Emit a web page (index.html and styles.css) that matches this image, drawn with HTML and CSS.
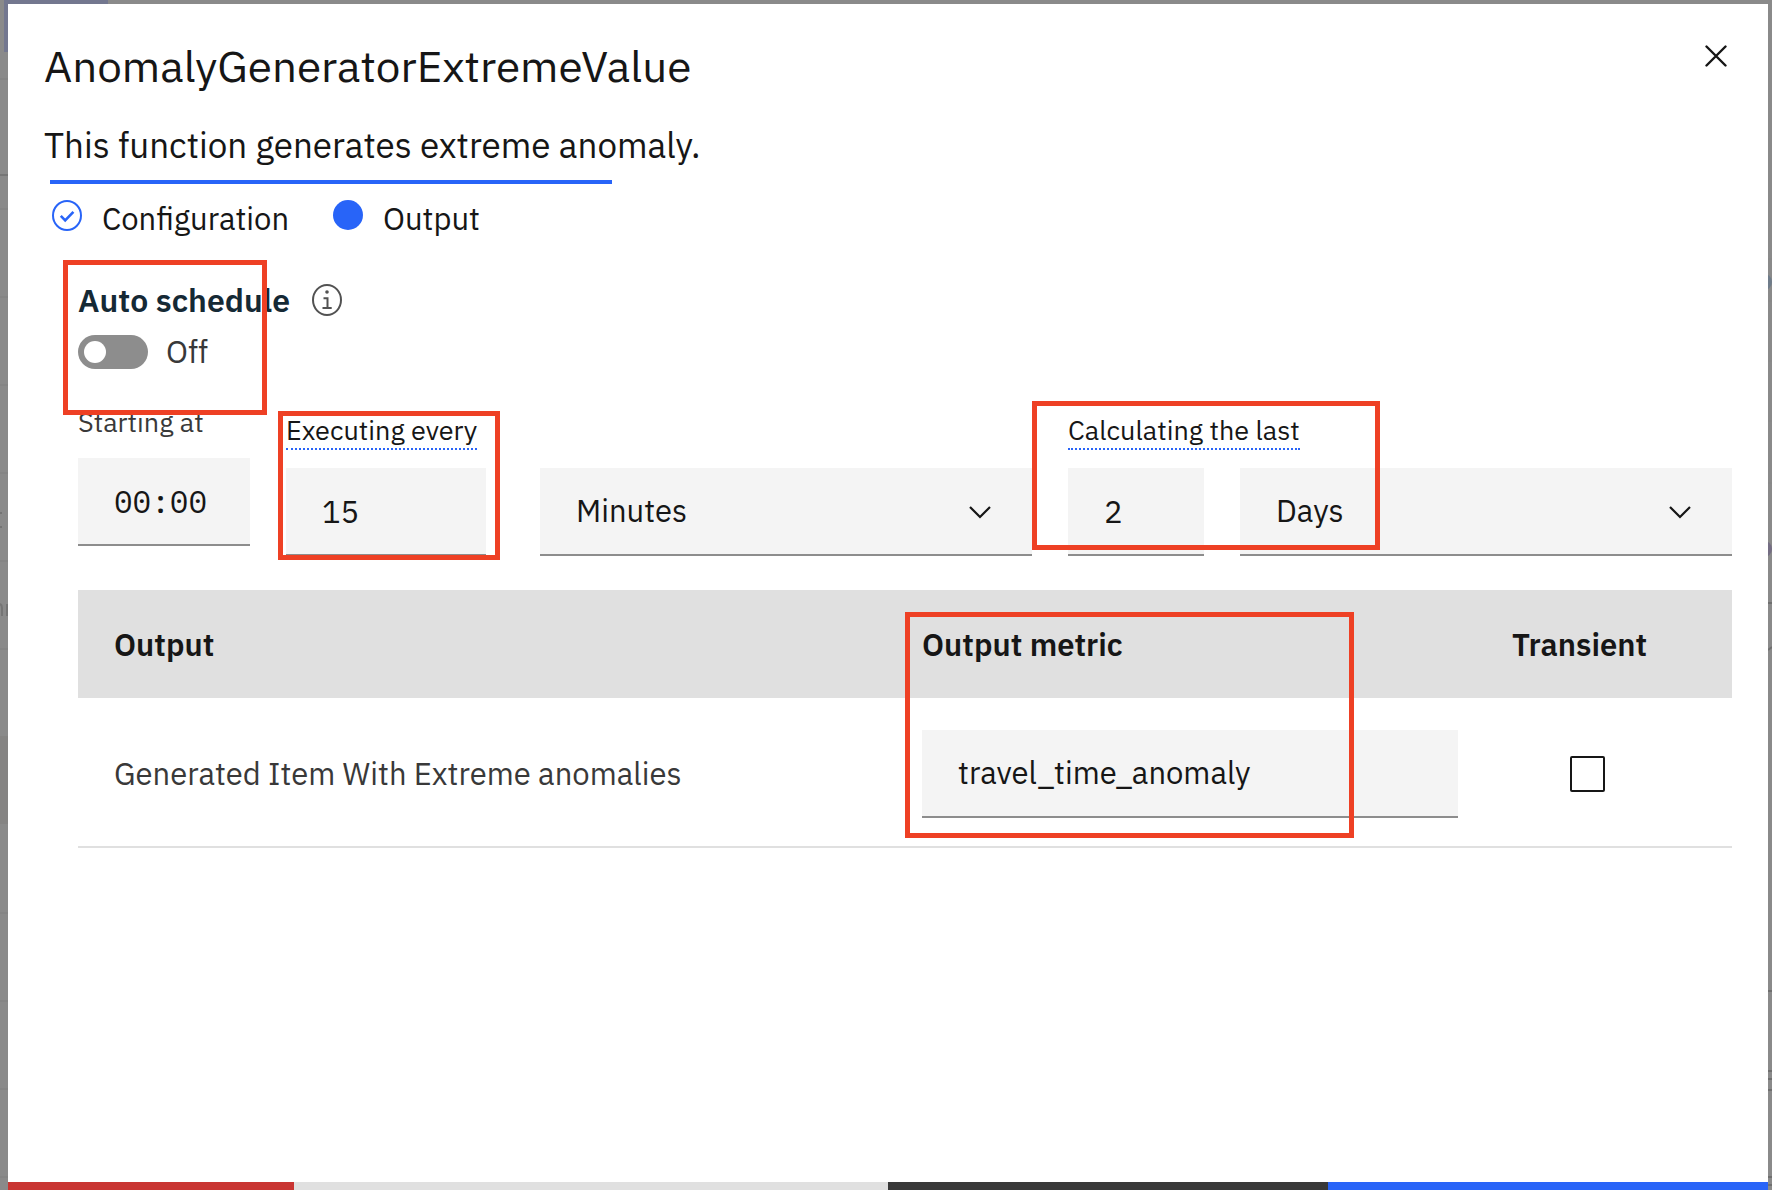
FILE: index.html
```html
<!DOCTYPE html>
<html lang="en">
<head>
<meta charset="utf-8">
<title>AnomalyGeneratorExtremeValue</title>
<link rel="stylesheet" href="styles.css">
</head>
<body>
<div class="backdrop" aria-hidden="true">
  <svg class="backdrop-left" width="108" height="1190" viewBox="0 0 108 1190">
    <rect x="4" width="104" height="52" fill="#73778f"/>
    <rect y="736" width="8" height="88" fill="#858483"/>
    <path d="M0 79h8M0 209h8M0 297h8M0 385h8M0 473h8M0 561h8M0 649h8M0 913h8M0 1001h8M0 1089h8M0 1177h8" stroke="#858585" stroke-width="2"/>
    <path d="M0 175h8" stroke="#767676" stroke-width="2"/>
    <path d="M0 513h2M0 527h2M0 604q2 1 2 4v8M7 604v12" stroke="#747474" stroke-width="2" fill="none"/>
  </svg>
  <svg class="backdrop-right" width="4" height="1190" viewBox="0 0 4 1190">
    <path d="M0 259h4M0 301h4M0 361h4M0 421h4M0 483h4" stroke="#868686" stroke-width="1"/>
    <circle cx="-4" cy="282" r="8" fill="#6f7c8a"/>
    <circle cx="-4" cy="549" r="8" fill="#746d83"/>
    <path d="M0 603h4M0 650l4-3M0 991h4M0 1071h4M0 1079h4M0 1090h4M0 1177h4M0 1185h4" stroke="#6f6f6f" stroke-width="2"/>
  </svg>
</div>
<div class="dialog" role="dialog" aria-labelledby="dialog-title">
  <header class="dialog-header">
    <div>
      <h1 class="dialog-title" id="dialog-title">AnomalyGeneratorExtremeValue</h1>
      <p class="dialog-description">This function generates extreme anomaly.</p>
    </div>
    <button class="close" type="button" aria-label="Close">
      <svg width="22" height="22" viewBox="0 0 22 22"><path d="M1.5 1.5l19 19M20.5 1.5l-19 19" fill="none" stroke="#161616" stroke-width="2.4" stroke-linecap="round"/></svg>
    </button>
  </header>

  <ol class="steps">
    <li class="step">
      <svg class="step-icon" width="30" height="31" viewBox="0 0 30 31" fill="none" stroke="#2864f8"><ellipse cx="15" cy="15.5" rx="14" ry="14.5" stroke-width="2"/><path d="M8.8 15.8l4.4 4.5 8.2-8.4" stroke-width="2.6"/></svg>
      <span>Configuration</span>
    </li>
    <li class="step" aria-current="step">
      <svg class="step-icon" width="30" height="30" viewBox="0 0 30 30"><circle cx="15" cy="15" r="15" fill="#2864f8"/></svg>
      <span>Output</span>
    </li>
  </ol>

  <main class="content">
    <section class="auto">
      <div class="auto-heading">
        <label class="auto-label" for="auto">Auto schedule</label>
        <svg width="30" height="32" viewBox="0 0 30 32" fill="none" stroke="#525252" stroke-width="2"><ellipse cx="15" cy="16" rx="14" ry="15"/><path d="M11.5 14.2h4v9.4M10.5 24h9.2"/><circle cx="15" cy="8" r="1.8" fill="#525252" stroke="none"/></svg>
      </div>
      <div class="toggle-row">
        <input class="toggle" id="auto" type="checkbox" role="switch">
        <span class="toggle-state">Off</span>
      </div>
      <div class="callout callout-auto"></div>
    </section>

    <section class="schedule">
      <div class="field field-start">
        <label class="label label-muted" for="start">Starting at</label>
        <input class="input input-time" id="start" type="text" value="00:00">
      </div>
      <div class="field">
        <label class="label label-tip" for="every">Executing every</label>
        <input class="input input-every" id="every" type="text" value="15">
        <div class="callout callout-every"></div>
      </div>
      <div class="field">
        <div class="select-box">
          <select class="input select" aria-label="Executing unit"><option>Minutes</option></select>
          <svg class="chevron" width="24" height="14" viewBox="0 0 24 14"><path d="M2 2l10 10L22 2" fill="none" stroke="#161616" stroke-width="2.2"/></svg>
        </div>
      </div>
      <div class="field">
        <label class="label label-tip" for="last">Calculating the last</label>
        <input class="input" id="last" type="text" value="2">
        <div class="callout callout-last"></div>
      </div>
      <div class="field">
        <div class="select-box">
          <select class="input select" aria-label="Calculating unit"><option>Days</option></select>
          <svg class="chevron" width="24" height="14" viewBox="0 0 24 14"><path d="M2 2l10 10L22 2" fill="none" stroke="#161616" stroke-width="2.2"/></svg>
        </div>
      </div>
    </section>

    <table class="outputs">
      <thead>
        <tr><th class="col-output">Output</th><th class="col-metric">Output metric</th><th class="col-transient">Transient</th></tr>
      </thead>
      <tbody>
        <tr>
          <td>Generated Item With Extreme anomalies</td>
          <td class="metric-cell">
            <input class="input" type="text" aria-label="Output metric" value="travel_time_anomaly">
            <div class="callout callout-metric"></div>
          </td>
          <td class="transient-cell"><input class="checkbox" type="checkbox" aria-label="Transient"></td>
        </tr>
      </tbody>
    </table>
  </main>

  <footer class="dialog-footer">
    <div class="bar-danger"></div>
    <div class="bar-space"></div>
    <div class="bar-secondary"></div>
    <div class="bar-primary"></div>
  </footer>
</div>
</body>
</html>
```
FILE: styles.css
```css
* { box-sizing: border-box; }

body {
  margin: 0;
  min-height: 100vh;
  display: flex;
  padding: 4px 4px 0 8px;
  background: #8a8a8a;
  color: #161616;
  font-family: "IBM Plex Sans", Roboto, sans-serif;
  font-size: 31px;
  line-height: 40px;
}

.backdrop {
  position: absolute;
  inset: 0;
  overflow: hidden;
}

.backdrop-left {
  position: absolute;
  left: 0;
  top: 0;
}

.backdrop-right {
  position: absolute;
  right: 0;
  top: 0;
}

.dialog {
  position: relative;
  flex: 1;
  display: flex;
  flex-direction: column;
  background: #fff;
}

.dialog-header {
  display: flex;
  justify-content: space-between;
  padding: 35px 37px 0 36px;
}

.dialog-title {
  margin: 0;
  font-size: 44px;
  line-height: 54px;
  font-weight: 400;
}

.dialog-description {
  margin: 32px 0 0;
  font-size: 35px;
  line-height: 40px;
}

.close {
  display: flex;
  align-self: flex-start;
  padding: 6px 4px;
  border: 0;
  background: none;
}

.steps {
  display: flex;
  gap: 44px;
  align-self: flex-start;
  width: 562px;
  margin: 15px 0 0 42px;
  padding: 15px 0 0 2px;
  border-top: 4px solid #2864f8;
  list-style: none;
}

.step {
  display: flex;
  gap: 20px;
}

.step-icon { margin-top: 1px; }

.content {
  flex: 1;
  padding: 41px 36px 0 70px;
}

.auto { position: relative; }

.auto-heading {
  display: flex;
  align-items: center;
  gap: 22px;
}

.auto-label {
  color: #152935;
  font-size: 32px;
  font-weight: 600;
}

.toggle-row {
  display: flex;
  align-items: center;
  gap: 18px;
  margin-top: 12px;
  color: #393939;
}

.toggle {
  appearance: none;
  width: 70px;
  height: 34px;
  margin: 0;
  padding: 6px;
  border-radius: 17px;
  background: #8d8d8d;
}

.toggle::before {
  content: "";
  display: block;
  width: 22px;
  height: 22px;
  border-radius: 50%;
  background: #fff;
}

.schedule {
  display: grid;
  grid-template-columns: 172px 218px 1fr 136px 1fr;
  gap: 36px;
  margin-top: 36px;
}

.field {
  position: relative;
  display: flex;
  flex-direction: column;
  align-items: flex-start;
  justify-content: flex-end;
}

.field-start {
  justify-content: flex-start;
}

.label {
  margin-bottom: 18px;
  font-size: 27px;
  line-height: 32px;
  white-space: nowrap;
}

.label-muted {
  margin-bottom: 22px;
  line-height: 28px;
  color: #393939;
}

.label-tip {
  margin-top: 6px;
  padding-bottom: 2px;
  border-bottom: 2px dotted #2864f8;
}

.input {
  width: 100%;
  height: 88px;
  padding: 0 36px;
  border: 0;
  border-bottom: 2px solid #8d8d8d;
  border-radius: 0;
  background: #f4f4f4;
  color: #161616;
  font: inherit;
}

.input-time { font-family: "IBM Plex Mono", "Liberation Mono", monospace; }
.input-every { width: 200px; }

.select-box {
  position: relative;
  width: 100%;
  height: 88px;
}

.select { appearance: none; }

.chevron {
  position: absolute;
  right: 40px;
  top: 37px;
  pointer-events: none;
}

.outputs {
  width: 100%;
  margin-top: 34px;
  border-collapse: collapse;
  table-layout: fixed;
}

.outputs th {
  height: 108px;
  padding: 2px 0 0 36px;
  background: #e0e0e0;
  text-align: left;
  font-weight: 600;
}

.outputs td {
  height: 149px;
  padding: 3px 0 0 36px;
  border-bottom: 2px solid #e0e0e0;
  color: #393939;
}

.col-metric { width: 590px; }
.col-transient { width: 256px; }

.outputs .metric-cell {
  position: relative;
  padding-right: 18px;
}

.metric-cell .input { display: block; }

.outputs .transient-cell { padding-left: 94px; }

.checkbox {
  appearance: none;
  display: block;
  width: 35px;
  height: 36px;
  margin: 0;
  border: 2px solid #161616;
  border-radius: 2px;
  background: #fff;
}

.callout {
  position: absolute;
  z-index: 1;
  border: 5px solid #ee4024;
  pointer-events: none;
}

.callout-auto {
  left: -15px;
  top: -20px;
  width: 204px;
  height: 155px;
}

.callout-every {
  left: -8px;
  bottom: -4px;
  width: 222px;
  height: 149px;
}

.callout-last {
  left: -36px;
  bottom: 6px;
  width: 348px;
  height: 149px;
}

.callout-metric {
  left: 19px;
  bottom: 8px;
  width: 449px;
  height: 226px;
}

.dialog-footer {
  display: flex;
  height: 8px;
}

.bar-danger { width: 286px; background: #c93532; }
.bar-space { flex: 1; background: #e0e0e0; }
.bar-secondary { width: 25%; background: #393939; }
.bar-primary { width: 25%; background: #2864f8; }
```
